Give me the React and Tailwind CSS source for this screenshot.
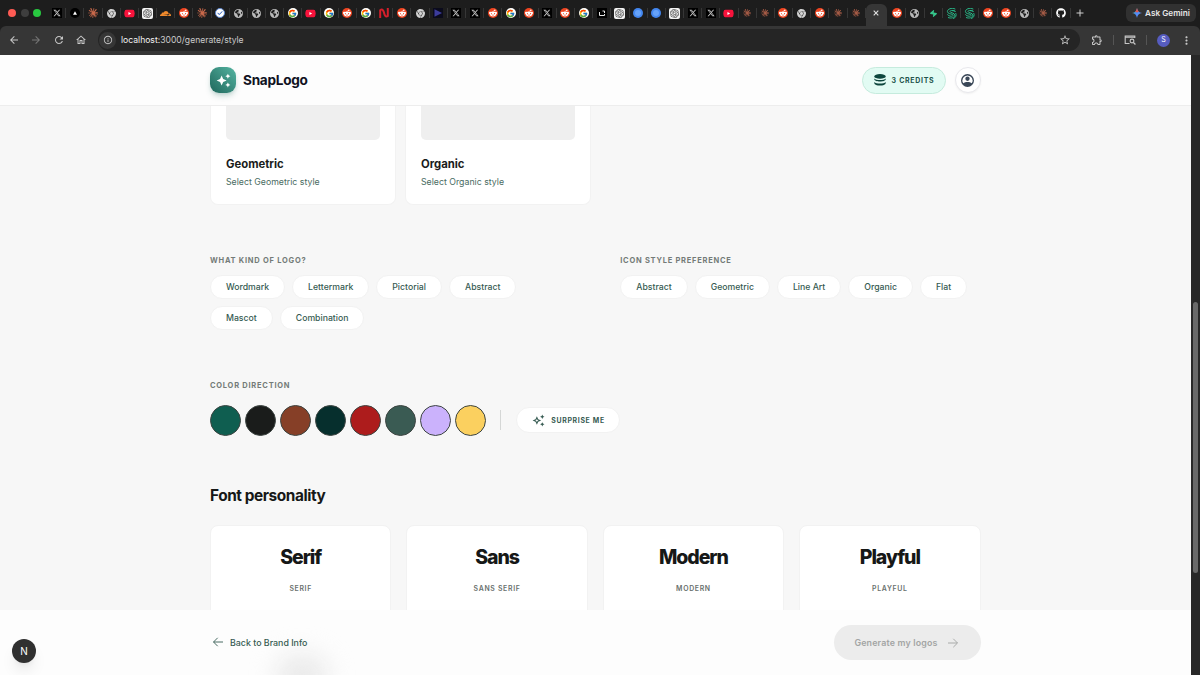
import React from 'react'
import clsx from 'clsx'
import { FaXTwitter, FaYoutube, FaRedditAlien, FaGithub, FaCheck, FaEarthAmericas } from 'react-icons/fa6'
import { SiClaude, SiOpenai, SiCloudflare, SiSupabase, SiGooglechrome, SiVercel } from 'react-icons/si'
import { FcGoogle } from 'react-icons/fc'
import {
  MdAutoAwesome,
  MdOutlineAutoAwesome,
  MdArrowBack,
  MdArrowForward,
  MdRefresh,
  MdOutlineHome,
  MdInfoOutline,
  MdStarOutline,
  MdOutlineExtension,
  MdMoreVert,
} from 'react-icons/md'

const TABS_LEFT =
  'x vercel claude chrome youtube openai cloudflare reddit claude check globe globe globe google youtube google reddit google n reddit chrome play x x reddit google reddit x reddit google app openai blue blue openai x x youtube claudeDim claudeDim reddit chrome reddit claudeDim claudeDim'.split(' ')
const TABS_RIGHT = 'reddit globe supabase swirl swirl reddit reddit globe claudeDim github'.split(' ')

const LOGO_KINDS = ['Wordmark', 'Lettermark', 'Pictorial', 'Abstract', 'Mascot', 'Combination']
const ICON_STYLES = ['Abstract', 'Geometric', 'Line Art', 'Organic', 'Flat']
const COLORS = ['#0f5e50', '#1a1c1b', '#863f27', '#062f2d', '#ad1c1c', '#3a5b53', '#cbb2fc', '#fbd05f']
const FONTS = [
  { name: 'Serif', label: 'Serif' },
  { name: 'Sans', label: 'Sans Serif' },
  { name: 'Modern', label: 'Modern' },
  { name: 'Playful', label: 'Playful' },
]

const Favicon = ({ type }) => {
  const round = 'flex h-[10px] w-[10px] items-center justify-center rounded-full'
  switch (type) {
    case 'x':
      return <span className="flex h-[10px] w-[10px] items-center justify-center bg-black"><FaXTwitter className="h-2 w-2 text-[#c8c8c8]" /></span>
    case 'vercel':
      return <span className={clsx(round, 'bg-black')}><SiVercel className="h-1 w-1 text-white" /></span>
    case 'claude':
      return <SiClaude className="h-[10px] w-[10px] text-[#c9694b]" />
    case 'claudeDim':
      return <SiClaude className="h-2 w-2 text-[#a85c46]" />
    case 'chrome':
      return <SiGooglechrome className="h-[9px] w-[9px] text-[#d2d2d2]" />
    case 'youtube':
      return <FaYoutube className="h-[11px] w-[11px] rounded-full bg-[linear-gradient(white,white)] bg-[length:4px_4px] bg-center bg-no-repeat text-[#f8133c]" />
    case 'openai':
      return <span className="flex h-[11px] w-[11px] items-center justify-center rounded-[2px] bg-[#f3f3f3]"><SiOpenai className="h-[9px] w-[9px] text-[#444]" /></span>
    case 'cloudflare':
      return <SiCloudflare className="h-[11px] w-[11px] text-[#f08a2c]" />
    case 'reddit':
      return <span className={clsx(round, 'bg-[#ee4420]')}><FaRedditAlien className="h-2 w-2 text-white" /></span>
    case 'check':
      return <span className={clsx(round, 'border border-[#5a86d0] bg-white')}><FaCheck className="h-[6px] w-[6px] text-[#2456b5]" /></span>
    case 'globe':
      return <FaEarthAmericas className="h-[9px] w-[9px] text-[#b9b9b9]" />
    case 'google':
      return <span className={clsx(round, 'bg-white')}><FcGoogle className="h-[9px] w-[9px]" /></span>
    case 'n':
      return (
        <svg viewBox="0 0 10 10" className="h-[10px] w-[10px]" fill="none" stroke="#d51f2b" strokeWidth="2">
          <path d="M1.2 10V2.2c2.5-2 3.6 1.3 3.9 2.8.4 2 1.6 4.800 3.700 3V0" />
        </svg>
      )
    case 'play':
      return (
        <svg viewBox="0 0 10 10" className="h-[10px] w-[10px]">
          <rect width="10" height="10" fill="#0b0b1c" />
          <path d="M1.500 1.200v7.600L9 5z" fill="#3c3c9c" />
        </svg>
      )
    case 'app':
      return (
        <svg viewBox="0 0 10 10" className="h-[10px] w-[10px]" fill="none" stroke="#e5e5e5">
          <rect width="10" height="10" fill="#000" stroke="none" />
          <path d="M2.500 4v3.500h5V6M5.500 3h2v2" />
        </svg>
      )
    case 'blue':
      return (
        <svg viewBox="0 0 10 10" className="h-[10px] w-[10px]" fill="none">
          <circle cx="5" cy="5" r="5" fill="#4487ef" />
          <circle cx="5" cy="5" r="3" fill="#66a2f8" />
        </svg>
      )
    case 'supabase':
      return <SiSupabase className="h-[7px] w-[7px] rotate-12 text-[#35c58b]" />
    case 'swirl':
      return (
        <svg viewBox="0 0 10 10" className="h-[11px] w-[11px]" fill="none" stroke="#28b98a" strokeWidth="0.900">
          <path d="M8.500 1C5-.6 1.300 1 1.300 3.200c0 2 3 2 4.500 2.600 1.200.5.700 1.700-.8 1.700-2 0-3-.8-3.800-1.700" />
          <path d="M8.300 3C6 1.700 3.600 2.200 3.600 3.200 3.600 4.500 8 4.200 8 6.600 8 8.800 4.500 9.800 1.800 8.600" />
          <path d="M8.800 4.600c1 1.800.2 4.200-2.300 5.100M5.500 2.400c1.500-.2 3 .3 3.300 1" />
        </svg>
      )
    default:
      return <FaGithub className="h-[10px] w-[10px] text-white" />
  }
}

const TabStrip = ({ tabs, className }) => (
  <div className={clsx('flex h-full shrink-0 items-center', className)}>
    {tabs.map((type, i) => (
      <div key={i} className="flex h-[10px] flex-1 items-center justify-center border-r border-[#363636]">
        <Favicon type={type} />
      </div>
    ))}
  </div>
)

const BrowserChrome = () => (
  <div className="h-[55px] shrink-0 bg-[#1d1d1d] text-[#c7c7c7]">
    <div className="flex h-[26px] items-center">
      <div className="flex w-[48px] shrink-0 items-center gap-[4.500px] pl-[8px]">
        <span className="h-2 w-2 rounded-full bg-[#fe5b54]" />
        <span className="h-2 w-2 rounded-full bg-[#3e3e3e]" />
        <span className="h-2 w-2 rounded-full bg-[#28c840]" />
      </div>
      <TabStrip tabs={TABS_LEFT} className="w-[817.500px]" />
      <div className="flex h-[22px] w-[21px] shrink-0 items-center justify-center self-end rounded-t-[6px] bg-[#363636] pb-1">
        <svg viewBox="0 0 6 6" className="h-[6px] w-[6px]" stroke="#e0e0e0" strokeWidth="1.100">
          <path d="M.7.7l4.600 4.600M5.300.7L.7 5.300" />
        </svg>
      </div>
      <TabStrip tabs={TABS_RIGHT} className="ml-[1.500px] w-[182.500px]" />
      <div className="flex w-[19px] shrink-0 justify-center">
        <svg viewBox="0 0 8 8" className="h-2 w-2" stroke="#d0d0d0">
          <path d="M4 .5v7M.5 4h7" />
        </svg>
      </div>
      <div className="mr-1 ml-auto flex h-[18px] w-[70px] items-center justify-center gap-[3px] rounded-[6px] bg-[#313131] text-[8.200px] font-semibold whitespace-nowrap text-[#e6e6e6]">
        <svg viewBox="0 0 10 10" className="h-[10px] w-[10px]">
          <defs>
            <linearGradient id="gemini" x1="0" x2="1" y1="0.200" y2="0.800">
              <stop offset="0" stopColor="#5aa56a" />
              <stop offset="0.450" stopColor="#4c8df6" />
              <stop offset="1" stopColor="#6b8df5" />
            </linearGradient>
          </defs>
          <path d="M5 0c.5 3 2 4.500 5 5-3 .5-4.500 2-5 5-.5-3-2-4.500-5-5 3-.5 4.500-2 5-5z" fill="url(#gemini)" />
          <path d="M5 0c.5 2 1 3 1.800 3.700L5 4.500 3.200 3.700C4 3 4.600 2 5 0z" fill="#e4574a" />
        </svg>
        Ask Gemini
      </div>
    </div>

    <div className="flex h-[29px] items-center rounded-t-[6px] bg-[#363636] pb-px pl-2">
      <MdArrowBack className="h-3 w-3 shrink-0" />
      <MdArrowForward className="ml-[10px] h-3 w-3 shrink-0 text-[#777]" />
      <MdRefresh className="ml-[11px] h-3 w-3 shrink-0" />
      <MdOutlineHome className="ml-[10px] h-3 w-3 shrink-0" />
      <div className="ml-[11px] flex h-[22px] w-[982px] shrink-0 items-center rounded-full bg-[#252525] px-px">
        <span className="flex h-[17px] w-[17px] items-center justify-center rounded-full bg-[#363636]">
          <MdInfoOutline className="h-[10px] w-[10px]" />
        </span>
        <span className="ml-[5px] text-[8.600px] text-[#cacaca]">
          <span className="text-[#f2f2f2]">localhost:</span>3000/generate/style
        </span>
        <MdStarOutline className="mr-2 ml-auto h-3 w-3" />
      </div>
      <MdOutlineExtension className="ml-[11px] h-3 w-3 shrink-0" />
      <span className="ml-[10px] h-[10px] w-px bg-[#555]" />
      <svg viewBox="0 0 12 12" className="ml-[10px] h-3 w-3 shrink-0" fill="none" stroke="currentColor" strokeWidth="1.100">
        <path d="M5.500 9.500H1.200V2h9.600v2M1.200 3.200h9.600" />
        <circle cx="8" cy="7" r="1.900" />
        <path d="M9.400 8.500l2 2" />
      </svg>
      <span className="ml-[10px] h-[10px] w-px bg-[#555]" />
      <span className="ml-[10px] flex h-[13px] w-[13px] shrink-0 items-center justify-center rounded-full bg-[#565cc0] text-[7px] text-white">S</span>
      <MdMoreVert className="ml-[10px] h-[13px] w-[13px] shrink-0" />
    </div>
  </div>
)

const Header = () => (
  <header className="relative z-10 flex h-[51px] shrink-0 items-center border-b border-[#ededed] bg-[#fdfdfd] pl-[210px]">
    <div className="flex h-[26px] w-[26px] items-center justify-center rounded-[9px] bg-gradient-to-bl from-[#55b5a2] to-[#1f675c] shadow-md shadow-[#0f5e50]/20">
      <MdAutoAwesome className="h-[15px] w-[15px] text-white" />
    </div>
    <span className="ml-[7px] pt-px text-[13.600px] font-bold tracking-[-0.020em] text-[#10121f]">SnapLogo</span>
    <div className="ml-auto flex items-center gap-[9px] pr-[210px]">
      <div className="flex h-[27px] w-[84px] items-center justify-center gap-[6px] rounded-full border border-[#c5ebdd] bg-[#e2fbf3] pl-px text-[7px] font-bold tracking-[0.100em] text-[#24554c]">
        <svg viewBox="0 0 12 12" className="h-3 w-3" fill="#0d463d">
          <ellipse cx="6" cy="2.400" rx="5.700" ry="2.300" />
          <path d="M.3 4.400C2 6.500 10 6.500 11.700 4.400V5.200C11.700 8.200.3 8.200.3 5.200z" />
          <path d="M.3 7.900C2 10 10 10 11.700 7.900V8.900C11.700 12.400.3 12.400.3 8.900z" />
        </svg>
        <span className="pt-[2px]">3 CREDITS</span>
      </div>
      <div className="flex h-[26px] w-[26px] items-center justify-center rounded-full border border-[#e8e8ec] bg-white shadow-xs">
        <svg viewBox="0 0 24 24" className="h-[13px] w-[13px]" fill="#3b4858">
          <path fillRule="evenodd" d="M12 0a12 12 0 1 0 0 24 12 12 0 0 0 0-24zm0 2.600a9.400 9.400 0 0 1 7.900 14.500c-2-1.600-5-2.500-7.900-2.500s-5.900.9-7.900 2.500A9.400 9.400 0 0 1 12 2.600z" />
          <circle cx="12" cy="8.800" r="4" />
        </svg>
      </div>
    </div>
  </header>
)

const StyleCard = ({ name }) => (
  <div className="h-[99px] w-[185.500px] rounded-b-[8px] border border-t-0 border-[#f2f2f2] bg-white px-[15px]">
    <div className="h-[34px] rounded-b-[5px] bg-[#efefef]" />
    <h3 className="mt-[15px] text-[11.300px] leading-[18px] font-bold text-[#1a1c1b]">{name}</h3>
    <p className="mt-[3px] text-[8.750px] leading-[13px] text-[#4a6b62]">Select {name} style</p>
  </div>
)

const SectionLabel = ({ children }) => (
  <h4 className="text-[7.500px] leading-[12px] font-bold tracking-[0.100em] text-[#747b78] uppercase">{children}</h4>
)

const PillGroup = ({ label, options }) => (
  <div className="flex-1">
    <SectionLabel>{label}</SectionLabel>
    <div className="mt-[8px] flex flex-wrap gap-[7px]">
      {options.map((o) => (
        <button key={o} className="h-[24px] rounded-full border border-[#f2f2f2] bg-white px-[15px] pt-px text-[8.700px] font-medium text-[#365b52]">
          {o}
        </button>
      ))}
    </div>
  </div>
)

const FontCard = ({ name, label }) => (
  <div className="flex h-[120px] flex-1 flex-col items-center rounded-[8px] border border-[#f2f2f2] bg-white pt-[17px]">
    <span className="text-[19.500px] leading-[28px] font-extrabold tracking-[-0.055em] text-[#161817]">{name}</span>
    <span className="mt-[12px] text-[6.900px] leading-[12px] font-semibold tracking-[0.100em] text-[#68706d] uppercase">{label}</span>
  </div>
)

const ArrowIcon = ({ className }) => (
  <svg viewBox="0 0 10 10" className={clsx('h-[10px] w-[10px]', className)} fill="none" stroke="currentColor" strokeWidth="0.900">
    <path d="M0 5h9.400M5.300.8L9.500 5 5.300 9.200" />
  </svg>
)

const App = () => (
  <div className="flex h-[675px] w-[1200px] flex-col overflow-hidden font-['Inter',sans-serif]">
    <BrowserChrome />
    <div className="flex min-h-0 flex-1 bg-[#282828]">
      <div className="flex w-[1190.500px] shrink-0 flex-col bg-[#f7f7f7]">
        <Header />

        <main className="min-h-0 flex-1 overflow-hidden px-[210px]">
          <div className="flex h-[99px] gap-[9.500px]">
            <StyleCard name="Geometric" />
            <StyleCard name="Organic" />
          </div>

          <div className="mt-[50px] flex gap-[50px]">
            <PillGroup label="What kind of logo?" options={LOGO_KINDS} />
            <PillGroup label="Icon style preference" options={ICON_STYLES} />
          </div>

          <div className="mt-[50px]">
            <SectionLabel>Color direction</SectionLabel>
            <div className="mt-[12px] flex h-[32px] items-center">
              <div className="flex gap-[4px]">
                {COLORS.map((c) => (
                  <button key={c} className="h-[31px] w-[31px] rounded-full border border-[#3d4542]" style={{ backgroundColor: c }} />
                ))}
              </div>
              <span className="ml-[14px] h-[20px] w-px bg-[#d5d7d6]" />
              <button className="ml-[15px] flex h-[26px] w-[104px] items-center justify-center gap-[6px] rounded-full border border-[#f2f2f2] bg-white pl-px text-[6.900px] font-bold tracking-[0.100em] text-[#365b52]">
                <MdOutlineAutoAwesome className="h-[13px] w-[13px]" />
                <span className="pt-[2px]">SURPRISE ME</span>
              </button>
            </div>
          </div>

          <h2 className="mt-[49px] text-[15.400px] leading-[22px] font-bold tracking-[-0.028em] text-[#161817]">Font personality</h2>
          <div className="mt-[18px] flex gap-[15px]">
            {FONTS.map((f) => (
              <FontCard key={f.name} {...f} />
            ))}
          </div>
        </main>

        <footer className="relative flex h-[65px] shrink-0 items-center justify-between overflow-hidden bg-[#fdfdfd] px-[210px]">
          <span className="absolute top-[44px] left-[276px] h-[44px] w-[52px] rounded-full bg-[#eaeaea] blur-[12px]" />
          <button className="relative flex items-center gap-[7px] pl-[3px] text-[8.850px] font-medium text-[#365b52]">
            <ArrowIcon className="rotate-180" />
            Back to Brand Info
          </button>
          <button className="flex h-[35px] w-[147px] items-center justify-center gap-[10px] rounded-full bg-[#ececec] pr-[2px] text-[8.850px] font-semibold tracking-[0.020em] text-[#a3a5a4]">
            Generate my logos
            <ArrowIcon />
          </button>
          <div className="absolute top-[29px] left-[12px] flex h-6 w-6 items-center justify-center rounded-full bg-[#303030] text-[10px] text-white shadow-lg">N</div>
        </footer>
      </div>
      <div className="flex w-[9.500px] justify-center">
        <div className="mt-[247px] h-[271px] w-[5px] rounded-full bg-[#696969]" />
      </div>
    </div>
  </div>
)

export default App
